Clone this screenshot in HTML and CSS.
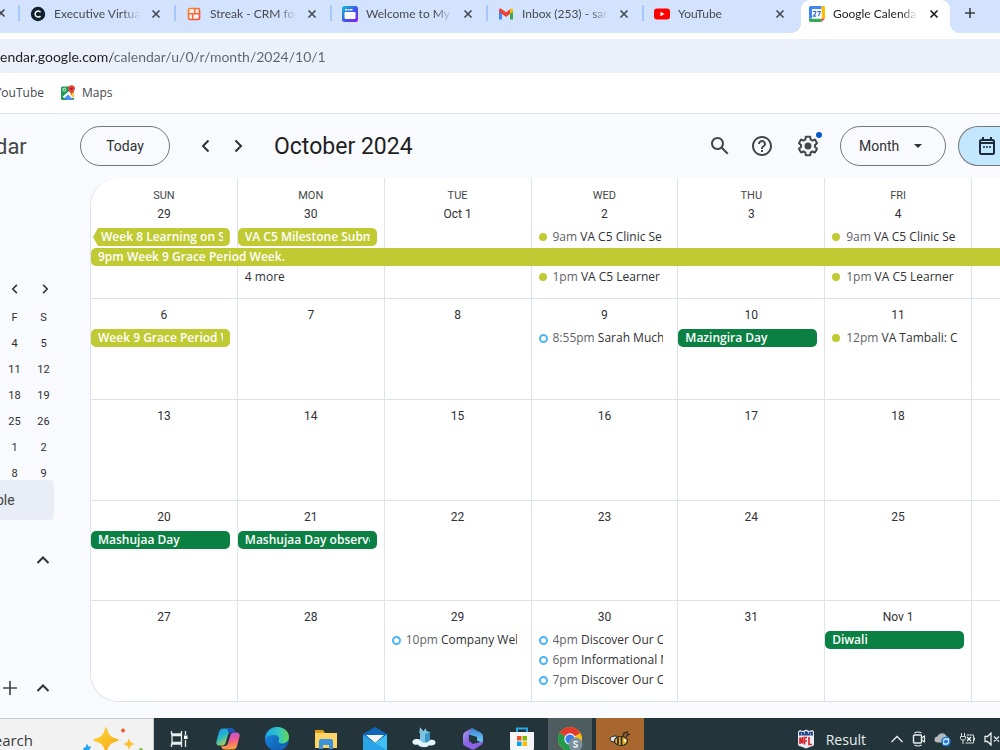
FILE: index.html
```html
<!DOCTYPE html>
<html lang="en">
<head>
<meta charset="utf-8">
<title>Google Calendar - October 2024</title>
<link rel="stylesheet" href="styles.css">
</head>
<body>
<svg class="defs" width="0" height="0" aria-hidden="true">
  <defs>
    <symbol id="x" viewBox="0 0 10 10"><path d="M1.500 1.500l7 7M8.500 1.500l-7 7" fill="none" stroke="currentColor" stroke-width="1.700"/></symbol>
    <symbol id="left" viewBox="0 0 16 16"><path d="M10.500 2.500L5 8l5.500 5.500" fill="none" stroke="currentColor" stroke-width="2"/></symbol>
    <symbol id="right" viewBox="0 0 16 16"><path d="M5.500 2.500L11 8l-5.500 5.500" fill="none" stroke="currentColor" stroke-width="2"/></symbol>
    <symbol id="up" viewBox="0 0 16 16"><path d="M2.500 11L8 5.500l5.500 5.500" fill="none" stroke="currentColor" stroke-width="2"/></symbol>
    <linearGradient id="gStreak" x2="1" y2="1"><stop stop-color="#ff8a2b"/><stop offset="1" stop-color="#f4483a"/></linearGradient>
    <linearGradient id="gWin" x2="1" y2="1"><stop stop-color="#13c3d2"/><stop offset=".5" stop-color="#3b5bea"/><stop offset="1" stop-color="#8b1cf0"/></linearGradient>
    <linearGradient id="gStar" x2="1" y2="1"><stop stop-color="#ffd83a"/><stop offset="1" stop-color="#f3a712"/></linearGradient>
    <linearGradient id="gCopA" x2=".7" y2="1"><stop stop-color="#2488f0"/><stop offset=".45" stop-color="#22b8c9"/><stop offset="1" stop-color="#e9d92c"/></linearGradient>
    <linearGradient id="gCopB" x2=".2" y2="1"><stop stop-color="#a95cf0"/><stop offset=".5" stop-color="#f0569b"/><stop offset="1" stop-color="#fb9b3f"/></linearGradient>
    <linearGradient id="gEdgeA" x2="1" y2="0"><stop stop-color="#1fa3e6"/><stop offset=".6" stop-color="#35c7c0"/><stop offset="1" stop-color="#66d84c"/></linearGradient>
    <linearGradient id="gEdgeB" x2="1" y2="1"><stop stop-color="#1a8fe0"/><stop offset="1" stop-color="#0d4fa8"/></linearGradient>
    <linearGradient id="gM" x2="1" y2="1"><stop stop-color="#b49cf5"/><stop offset="1" stop-color="#6a46d8"/></linearGradient>
    <linearGradient id="gM2" x2="0" y2="1"><stop stop-color="#3d7fd8"/><stop offset="1" stop-color="#6fd3f5"/></linearGradient>
  </defs>
</svg>

<nav class="tabs" aria-label="Browser tabs">
  <div class="stub"><button class="close" aria-label="Close tab"><svg width="10" height="10"><use href="#x"/></svg></button></div>
  <div class="tab">
    <svg width="16" height="16" viewBox="0 0 16 16"><circle cx="8" cy="8" r="7.200" fill="#10202c"/><path d="M10.500 6.200a3 3 0 1 0 0 3.800" fill="none" stroke="#fff" stroke-width="1.500"/></svg>
    <a class="title" href="#">Executive Virtua</a>
    <button class="close" aria-label="Close tab"><svg width="10" height="10"><use href="#x"/></svg></button>
  </div>
  <div class="tab">
    <svg width="16" height="16" viewBox="0 0 16 16"><rect x="2.500" y="2.500" width="11" height="11" rx="1.500" fill="#fff3ee" stroke="url(#gStreak)" stroke-width="1.700"/><path d="M2.500 7.700h11M8.800 3v4.700M6.700 7.700V13" fill="none" stroke="#f8693a" stroke-width="1.500"/></svg>
    <a class="title" href="#">Streak - CRM fo</a>
    <button class="close" aria-label="Close tab"><svg width="10" height="10"><use href="#x"/></svg></button>
  </div>
  <div class="tab">
    <svg width="16" height="16" viewBox="0 0 16 16"><rect width="16" height="16" rx="2.500" fill="url(#gWin)"/><path d="M3 3.800h8" stroke="#fff" stroke-width="1.500" stroke-dasharray="2 .6"/><rect x="2.500" y="6" width="11" height="7" rx="1.200" fill="#fff"/></svg>
    <a class="title" href="#">Welcome to My</a>
    <button class="close" aria-label="Close tab"><svg width="10" height="10"><use href="#x"/></svg></button>
  </div>
  <div class="tab">
    <svg width="16" height="16" viewBox="0 0 16 16"><path d="M1 4v9.500h3V7z" fill="#4285f4"/><path d="M15 4v9.500h-3V7z" fill="#34a853"/><path d="M1 4.200C1 2.400 2.700 2.200 4 3.200l4 3 4-3V8l-4 3-4-3-3-2.200z" fill="#ea4335"/><path d="M12 3.200c1.500-1.100 3-.6 3 1v1.600L12 8z" fill="#fbbc04"/></svg>
    <a class="title" href="#">Inbox (253) - sar</a>
    <button class="close" aria-label="Close tab"><svg width="10" height="10"><use href="#x"/></svg></button>
  </div>
  <div class="tab">
    <svg width="16" height="16" viewBox="0 0 16 16"><rect y="2.500" width="16" height="11" rx="3" fill="#f00"/><path d="M6.500 5.700v4.600l4-2.300z" fill="#fff"/></svg>
    <a class="title" href="#">YouTube</a>
    <button class="close" aria-label="Close tab"><svg width="10" height="10"><use href="#x"/></svg></button>
  </div>
  <div class="tab active">
    <svg width="16" height="16" viewBox="0 0 16 16"><path d="M0 1.500Q0 0 1.500 0h11v3.500H3.500v9H0z" fill="#4285f4"/><path d="M12.500 0h2Q16 0 16 1.500v11h-3.500z" fill="#fbbc04"/><path d="M0 12.500h12.500V16h-11Q0 16 0 14.500z" fill="#34a853"/><path d="M12.500 12.500H16L12.500 16z" fill="#ea4335"/><path d="M3 3h9.500v9.500H3z" fill="#fff"/><path d="M4.300 6.100c.5-1 2.700-.9 2.500.5C6.700 7.800 5 8.800 4.300 10.100h2.900M8.300 5.700h3L9.400 10.300" fill="none" stroke="#2f6fe4" stroke-width="1.200"/></svg>
    <a class="title" href="#">Google Calenda</a>
    <button class="close" aria-label="Close tab"><svg width="10" height="10"><use href="#x"/></svg></button>
  </div>
  <button class="new-tab" aria-label="New tab"><svg width="12" height="12" viewBox="0 0 12 12"><path d="M6 1v10M1 6h10" stroke="#3c4043" stroke-width="1.600"/></svg></button>
</nav>

<div class="address"><input aria-label="Address" value="endar.google.com/calendar/u/0/r/month/2024/10/1"></div>

<div class="bookmarks">
  <a href="#">YouTube</a>
  <a href="#" class="maps"><svg width="16" height="16" viewBox="0 0 16 16"><rect x="1" y="1.500" width="13" height="13.500" rx="1.500" fill="#1e9b53"/><path d="M1 13L9 6l5.500 7z" fill="#fff"/><path d="M2.500 15L8 9.500l5.500 5.500z" fill="#4b8df8"/><path d="M1 10.500L6.500 15H2.500Q1 15 1 13.500z" fill="#1e9b53"/><path d="M9.500 9L14 13.500V7z" fill="#f6c944"/><circle cx="4.300" cy="4.600" r="1.500" fill="none" stroke="#fff" stroke-width=".9"/><path d="M11.500 9.500C11 7.500 8 6 8 3.700a3.500 3.500 0 0 1 7 0c0 2.300-3 3.800-3.500 5.800z" fill="#e8453c"/><circle cx="11.500" cy="3.600" r="1.200" fill="#9c1c16"/></svg>Maps</a>
</div>

<div class="app">
  <header class="bar">
    <span class="brand">dar</span>
    <button class="pill today">Today</button>
    <button class="icon prev" aria-label="Previous month"><svg width="16" height="16"><use href="#left"/></svg></button>
    <button class="icon next" aria-label="Next month"><svg width="16" height="16"><use href="#right"/></svg></button>
    <h1>October 2024</h1>
    <div class="tools">
      <button class="icon" aria-label="Search"><svg width="24" height="24" viewBox="0 0 24 24"><path fill="#444746" d="M20.490 19l-5.730-5.730C15.530 12.200 16 10.910 16 9.500 16 5.910 13.090 3 9.500 3S3 5.910 3 9.500 5.910 16 9.500 16c1.410 0 2.700-.47 3.770-1.240L19 20.490 20.490 19zM5 9.500C5 7.010 7.010 5 9.500 5S14 7.010 14 9.500 11.990 14 9.500 14 5 11.990 5 9.500z"/></svg></button>
      <button class="icon" aria-label="Help"><svg width="24" height="24" viewBox="0 0 24 24"><path fill="#444746" d="M11 18h2v-2h-2v2zm1-16C6.480 2 2 6.480 2 12s4.480 10 10 10 10-4.480 10-10S17.520 2 12 2zm0 18c-4.410 0-8-3.590-8-8s3.590-8 8-8 8 3.590 8 8-3.590 8-8 8zm0-14c-2.210 0-4 1.790-4 4h2c0-1.100.9-2 2-2s2 .9 2 2c0 2-3 1.750-3 5h2c0-2.250 3-2.500 3-5 0-2.210-1.790-4-4-4z"/></svg></button>
      <button class="icon gear" aria-label="Settings"><svg width="24" height="24" viewBox="0 0 24 24"><path fill="#444746" d="M13.850 22.250h-3.700c-.74 0-1.360-.54-1.450-1.270l-.27-1.890c-.27-.14-.53-.29-.79-.46l-1.800.72c-.7.260-1.470-.03-1.810-.65L2.200 15.530c-.35-.66-.2-1.440.36-1.880l1.530-1.190c-.01-.15-.02-.3-.02-.46 0-.15.010-.31.020-.46l-1.520-1.190c-.59-.45-.74-1.260-.37-1.880l1.850-3.190c.34-.62 1.110-.9 1.790-.63l1.810.730c.26-.17.52-.32.780-.46l.27-1.910c.09-.7.710-1.250 1.440-1.250h3.700c.74 0 1.360.54 1.450 1.270l.27 1.890c.27.140.53.290.79.460l1.800-.72c.71-.26 1.480.030 1.820.65l1.840 3.180c.36.66.2 1.440-.36 1.880l-1.520 1.190c.01.150.02.300.020.460s-.01.310-.02.460l1.520 1.190c.56.450.72 1.230.37 1.860l-1.860 3.220c-.34.620-1.110.900-1.800.630l-1.800-.72c-.26.170-.52.320-.78.460l-.27 1.910c-.1.680-.72 1.220-1.460 1.220zm-3.230-2h2.760l.37-2.550.53-.22c.44-.18.88-.44 1.340-.78l.45-.34 2.380.96 1.380-2.400-2.030-1.580.07-.56c.03-.26.060-.51.060-.78s-.03-.53-.06-.78l-.07-.56 2.030-1.580-1.390-2.400-2.390.960-.45-.35c-.42-.32-.87-.58-1.330-.77l-.52-.22-.37-2.550h-2.760l-.37 2.550-.53.210c-.44.190-.88.440-1.340.790l-.45.330-2.380-.95-1.390 2.390 2.030 1.580-.07.560a7 7 0 0 0-.06.790c0 .260.020.530.060.780l.07.560-2.030 1.580 1.380 2.400 2.390-.96.450.350c.43.330.86.580 1.330.770l.53.220.38 2.550z"/><circle cx="12" cy="12" r="3.500" fill="#444746"/></svg><i class="dot"></i></button>
      <label class="pill view"><select aria-label="View"><option>Month</option></select><svg width="8" height="4" viewBox="0 0 8 4"><path d="M0 0h8L4 4z" fill="#303134"/></svg></label>
      <button class="pill mode" aria-label="Switch to Calendar"><svg width="18" height="20" viewBox="0 0 18 20"><path d="M5 1v3M13 1v3" stroke="#1b2b3a" stroke-width="2"/><rect x="2" y="4" width="14" height="14" rx="1.500" fill="none" stroke="#1b2b3a" stroke-width="2"/><path d="M2 7h14" stroke="#1b2b3a" stroke-width="2"/><path d="M5 11h2M8 11h2M11 11h2" stroke="#1b2b3a" stroke-width="1.700"/></svg></button>
    </div>
  </header>

  <div class="body">
    <aside class="side">
      <div class="mini-nav">
        <button class="icon" aria-label="Previous"><svg width="12" height="12"><use href="#left"/></svg></button>
        <button class="icon" aria-label="Next"><svg width="12" height="12"><use href="#right"/></svg></button>
      </div>
      <table class="mini">
        <thead><tr><th>F</th><th>S</th></tr></thead>
        <tbody>
          <tr><td>4</td><td>5</td></tr>
          <tr><td>11</td><td>12</td></tr>
          <tr><td>18</td><td>19</td></tr>
          <tr><td>25</td><td>26</td></tr>
          <tr><td>1</td><td>2</td></tr>
          <tr><td>8</td><td>9</td></tr>
        </tbody>
      </table>
      <input class="people" placeholder="ple" aria-label="Search for people">
      <div class="section first">
        <button class="icon" aria-label="Collapse"><svg width="16" height="16"><use href="#up"/></svg></button>
      </div>
      <div class="section second">
        <button class="icon" aria-label="Add calendar"><svg width="14" height="14" viewBox="0 0 14 14"><path d="M7 0v14M0 7h14" stroke="#444746" stroke-width="1.700"/></svg></button>
        <button class="icon" aria-label="Collapse"><svg width="16" height="16"><use href="#up"/></svg></button>
      </div>
    </aside>

    <main class="month">
      <section class="week top">
        <div class="day c1"><b>SUN</b>29</div><div class="day c2"><b>MON</b>30</div><div class="day c3"><b>TUE</b>Oct 1</div><div class="day c4"><b>WED</b>2</div><div class="day c5"><b>THU</b>3</div><div class="day c6"><b>FRI</b>4</div>
        <button class="chip lime arrow c1 l1"><span>Week 8 Learning on S</span></button>
        <button class="chip lime c2 l1"><span>VA C5 Milestone Subm</span></button>
        <button class="chip lime long l2"><span>9pm Week 9 Grace Period Week.</span></button>
        <button class="more c2 l3">4 more</button>
        <button class="ev c4 l1"><i></i><span><em>9am</em> VA C5 Clinic Se</span></button>
        <button class="ev c4 l3"><i></i><span><em>1pm</em> VA C5 Learner C</span></button>
        <button class="ev c6 l1"><i></i><span><em>9am</em> VA C5 Clinic Se</span></button>
        <button class="ev c6 l3"><i></i><span><em>1pm</em> VA C5 Learner C</span></button>
      </section>
      <section class="week">
        <div class="day c1">6</div><div class="day c2">7</div><div class="day c3">8</div><div class="day c4">9</div><div class="day c5">10</div><div class="day c6">11</div>
        <button class="chip lime c1 l1"><span>Week 9 Grace Period W</span></button>
        <button class="ev open c4 l1"><i></i><span><em>8:55pm</em> Sarah Much</span></button>
        <button class="chip green c5 l1"><span>Mazingira Day</span></button>
        <button class="ev c6 l1"><i></i><span><em>12pm</em> VA Tambali: Co</span></button>
      </section>
      <section class="week">
        <div class="day c1">13</div><div class="day c2">14</div><div class="day c3">15</div><div class="day c4">16</div><div class="day c5">17</div><div class="day c6">18</div>
      </section>
      <section class="week">
        <div class="day c1">20</div><div class="day c2">21</div><div class="day c3">22</div><div class="day c4">23</div><div class="day c5">24</div><div class="day c6">25</div>
        <button class="chip green c1 l1"><span>Mashujaa Day</span></button>
        <button class="chip green c2 l1"><span>Mashujaa Day observe</span></button>
      </section>
      <section class="week">
        <div class="day c1">27</div><div class="day c2">28</div><div class="day c3">29</div><div class="day c4">30</div><div class="day c5">31</div><div class="day c6">Nov 1</div>
        <button class="ev open c3 l1"><i></i><span><em>10pm</em> Company Wel</span></button>
        <button class="ev open c4 l1"><i></i><span><em>4pm</em> Discover Our C</span></button>
        <button class="ev open c4 l2"><i></i><span><em>6pm</em> Informational M</span></button>
        <button class="ev open c4 l3"><i></i><span><em>7pm</em> Discover Our C</span></button>
        <button class="chip green c6 l1"><span>Diwali</span></button>
      </section>
    </main>
  </div>
</div>

<footer class="taskbar">
  <button class="search"><span>earch</span><svg width="66" height="28" viewBox="0 0 66 28"><path d="M23 2c2 8 4 9.500 12 12-8 2.500-10 4-12 12-2-8-4-9.500-12-12 8-2.500 10-4 12-12z" fill="url(#gStar)" stroke="url(#gStar)" stroke-width="1.500" stroke-linejoin="round"/><path d="M46 12c1 4 2 5 6 6-4 1-5 2-6 6-1-4-2-5-6-6 4-1 5-2 6-6z" fill="#fbc02d"/><circle cx="40" cy="4.500" r="2" fill="#ef5b2b"/><circle cx="58" cy="24" r="2" fill="#7cc243"/><path d="M4 17.500l1.500 3 3 .2-2 2.300 1 3-3-.8L2 27.500l-.3-3-2.200-2 3-1.200z" fill="#1ea7ee"/></svg></button>
  <div class="apps">
    <button aria-label="Task view"><svg width="18" height="18" viewBox="0 0 18 18"><path d="M1.500 1v3h10V1M1.500 17v-3h10v3M2 5.500h9.500v7H2zM15.500 1v4M15.500 10v7" fill="none" stroke="#e8eded" stroke-width="1.300"/><path d="M14 5.500h3.500V9H14z" fill="#fff"/></svg></button>
    <button aria-label="Copilot"><svg width="26" height="24" viewBox="0 0 26 24"><path d="M8 1.500h8.500c2 0 2.700 1.500 3.200 3.500h-3.200c-2 0-3 1-3.600 3l-2.200 7.500c-.6 2-1.700 3-3.200 3H4.500c-2.800 0-3.600-2-3-4.300L4 5C4.700 2.700 5.500 1.500 8 1.500z" fill="url(#gCopA)"/><path d="M18 22.500H9.500c-2 0-2.700-1.500-3.200-3.500h3.200c2 0 3-1 3.600-3l2.200-7.500c.6-2 1.700-3 3.200-3h3c2.800 0 3.600 2 3 4.300L22 19c-.7 2.300-1.500 3.500-4 3.500z" fill="url(#gCopB)"/><path d="M12 1.500h4.500c2 0 2.700 1.500 3.200 3.500h-3.200c-1.200 0-2 .4-2.700 1.200z" fill="#1c4fc4"/></svg></button>
    <button aria-label="Edge"><svg width="26" height="26" viewBox="0 0 26 26"><circle cx="13" cy="13" r="12" fill="url(#gEdgeB)"/><path d="M1 13C1.500 5.500 7 1 13 1c7 0 12 4.500 12 10 0 4-3 6.500-7 6.500-2.500 0-4-1-3.500-2.200 1.500-2 .5-6.300-4-6.300C6 9 2 10.500 1 13z" fill="url(#gEdgeA)"/><path d="M10 12c-3 5 1 10 6 11 3 0 5.500-1.500 7-4-4 2-9 1-10.500-2.500C11.500 14.500 12 13 13 12z" fill="#1769bd"/></svg></button>
    <button aria-label="File Explorer"><svg width="24" height="22" viewBox="0 0 24 22"><path d="M1 2h8l2 3h12v15H1z" fill="#e0a016"/><path d="M1 5h22v15H1z" fill="#ffd467"/><path d="M5 21v-8q0-2 2-2h10q2 0 2 2v8h-4v-4H9v4z" fill="#3a94dd"/></svg></button>
    <button aria-label="Mail"><svg width="26" height="26" viewBox="0 0 26 26"><path d="M1 8L13 1l12 7v5H1z" fill="#1067b8"/><path d="M4 9h18l-9 8z" fill="#f3f6f8"/><path d="M1 8.500L13 17 25 8.500V24H1z" fill="#2aa4e8"/><path d="M13 17l12-8.500V24z" fill="#3fc0f5"/></svg></button>
    <button aria-label="Cloud app"><svg width="24" height="24" viewBox="0 0 24 24"><path d="M8 5l5-1.500L18 5v9l-5 2.500L8 14z" fill="#7cc4e4"/><path d="M13 7l5-2v9l-5 2.500z" fill="#3f93c4"/><path d="M8 6l.5-4 2.500 3M12.500 4l1.500-2" stroke="#8ed0ea" stroke-width="1.400" fill="none"/><path d="M5 12c-3 0-5 1.500-4.500 3.500C1 18 4 18 6 17.500c1 3 9 4 11 .8 3 .7 6.500 0 6.500-2.800 0-2.500-3-3-5.500-2.500-1 2-3 2.500-5 2.500s-4-.5-4.500-2.500C7.500 12.300 6.500 12 5 12z" fill="#e3f5fc"/></svg></button>
    <button aria-label="Microsoft 365"><svg width="24" height="26" viewBox="0 0 24 26"><path d="M11 2L4 6Q2 7 2 9.500v8l6 2.500V9z" fill="url(#gM)"/><path d="M11 2l8.500 4.500Q22 8 22 10v7l-6-2.500V11L8 8.500z" fill="url(#gM2)"/><path d="M2 17.500L8 15l4 3 10-3q0 3-2 4l-6 4q-2 1-4 0l-6-3Q2 19 2 17.500z" fill="#8a63e6"/></svg></button>
    <button aria-label="Store"><svg width="26" height="26" viewBox="0 0 26 26"><path d="M8 7V2.500h10V7" fill="none" stroke="#2aa8e6" stroke-width="2"/><path d="M1 6h24v16q0 3-3 3H4q-3 0-3-3z" fill="#f4f5f6"/><path d="M8 10h4.500v4.500H8z" fill="#f25022"/><path d="M13.500 10H18v4.500h-4.500z" fill="#7fba00"/><path d="M8 15.500h4.500V20H8z" fill="#00a4ef"/><path d="M13.500 15.500H18V20h-4.500z" fill="#ffb900"/></svg></button>
    <button class="open-app" aria-label="Chrome"><svg width="26" height="26" viewBox="0 0 26 26"><circle cx="13" cy="13" r="12" fill="#fbc116"/><path d="M13 13L2.600 7A12 12 0 0 1 23.400 7z" fill="#e33b2e"/><path d="M13 13L2.600 7A12 12 0 0 0 13 25l5-9z" fill="#229a4a"/><circle cx="13" cy="13" r="5.700" fill="#fff"/><circle cx="13" cy="13" r="4.600" fill="#3b7ded"/><circle cx="18.500" cy="18.500" r="7" fill="#7b909c"/><path d="M20.500 16.200c-1-1.300-4-1-3.700.7.200 1.800 3.700.9 3.700 2.900 0 1.800-3 1.800-4 .4" fill="none" stroke="#fff" stroke-width="1.200"/></svg></button>
    <button class="bee" aria-label="Bee app"><svg width="22" height="16" viewBox="0 0 22 16"><ellipse cx="6" cy="8" rx="5" ry="3" fill="#dfe5e4" stroke="#2b2b2b"/><ellipse cx="12" cy="10" rx="6.500" ry="4.500" fill="#e9b21e" stroke="#2b2b2b" stroke-width="1.200"/><path d="M9 6.500v7M12.500 5.500v9" stroke="#2b2b2b" stroke-width="1.800"/><path d="M14 6l1-4 4-1M17 6l2-3 2 .5" fill="none" stroke="#2b2b2b" stroke-width="1.400"/><circle cx="16" cy="9.500" r="1.200" fill="#fff"/></svg></button>
  </div>
  <div class="tray">
    <button class="result"><svg width="18" height="20" viewBox="0 0 18 20"><path d="M1 2.500L3 1l3 1 3-1.500L12 2l3-1 2 1.500V15q0 2-3 2.500L9 19.500 4 17.500Q1 17 1 15z" fill="#e9edf3"/><path d="M2 3l2-.5 2.500.7L9 2l2.500 1.200L14 2.500l2 .5v3.500H2z" fill="#274b8c"/><path d="M4 5h1M7 4h1M11 4h1M13 5h1" stroke="#fff"/><path d="M3 15V8.500l2.500 6V8M7.500 15.500V8.500H10M7.500 12H10M12 8v7.500h3" fill="none" stroke="#d22630" stroke-width="1.700"/></svg><span>Result</span></button>
    <button aria-label="Show hidden icons"><svg width="14" height="8" viewBox="0 0 14 8"><path d="M1.500 7L7 1.500 12.500 7" fill="none" stroke="#e8eded" stroke-width="1.300"/></svg></button>
    <button aria-label="Meet now"><svg width="14" height="16" viewBox="0 0 14 16"><rect x="1.500" y="4" width="8" height="8" rx="1" fill="none" stroke="#e8eded" stroke-width="1.400"/><path d="M9.500 7l3-2v6l-3-2M2.500 2Q6 0 9.500 2M2.500 14Q6 16 9.500 14" fill="none" stroke="#e8eded" stroke-width="1.200"/></svg></button>
    <button aria-label="OneDrive"><svg width="18" height="16" viewBox="0 0 18 16"><path d="M3.500 11.500a3 3 0 0 1 0-6C5 1.500 11 1 12.500 5.500c3 0 3.500 3 2.500 6z" fill="#b4bab9"/><circle cx="12" cy="10.500" r="4.800" fill="#1f7bd8"/><path d="M9.500 10a2.600 2.600 0 0 1 4.800-.8V7.500M14.500 11a2.600 2.600 0 0 1-4.800 1v1.500" fill="none" stroke="#fff" stroke-width="1.200"/></svg></button>
    <button aria-label="Battery"><svg width="16" height="14" viewBox="0 0 16 14"><path d="M1.500 1v3M4.500 1v3M.5 4.500h5v2l-1 1.500h-3l-1-1.500zM3 8v4M6.500 3h7v8h-8M14.500 5.500v3" fill="none" stroke="#d4dada"/><path d="M7 5l4 4M11 5L7 9" stroke="#fff" stroke-width="1.200"/></svg></button>
    <button aria-label="Volume muted"><svg width="16" height="14" viewBox="0 0 16 14"><path d="M1 4.500h2.500L7 1v12L3.500 9.500H1zM10 4.500l5 5M15 4.500l-5 5" fill="none" stroke="#e8eded" stroke-width="1.300"/></svg></button>
  </div>
</footer>
</body>
</html>
```

FILE: styles.css
```css
* { box-sizing: border-box; }
body {
  margin: 0;
  height: 100vh;
  display: flex;
  flex-direction: column;
  overflow: hidden;
  background: #fff;
  color: #303134;
  font-family: Roboto, "Liberation Sans", sans-serif;
  font-size: 12px;
}
button, input, select {
  margin: 0;
  padding: 0;
  border: 0;
  background: none;
  color: inherit;
  font: inherit;
}
a { color: inherit; text-decoration: none; }
svg { display: block; flex: none; }
.defs { position: absolute; }

/* browser chrome */
.tabs {
  flex: none;
  display: flex;
  height: 33px;
  overflow: hidden;
  background: #d3e2fd;
  color: #474b50;
  font: 12px Lato, sans-serif;
}
.stub { width: 18px; padding-top: 8px; display: flex; align-items: flex-start; }
.stub .close { margin-left: -4px; }
.tab {
  flex: none;
  display: flex;
  width: 156px;
  height: 27px;
  padding: 0 13px 0 12px;
  align-items: center;
  background: linear-gradient(#a8c7fa, #a8c7fa) 0 5px / 2px 16px no-repeat;
}
.tab.active {
  position: relative;
  width: 149px;
  height: 33px;
  margin-left: 3px;
  padding: 0 11px 6px 8px;
  border-radius: 9px 9px 0 0;
  background: #fff;
  color: #1f1f1f;
}
.tab.active::before, .tab.active::after {
  content: "";
  position: absolute;
  bottom: 0;
  width: 10px;
  height: 10px;
}
.tab.active::before { right: 100%; background: radial-gradient(circle at 0 0, #d3e2fd 10px, #fff 10px); }
.tab.active::after { left: 100%; background: radial-gradient(circle at 100% 0, #d3e2fd 10px, #fff 10px); }
.title {
  flex: 1;
  margin: 0 11px 0 8px;
  overflow: hidden;
  white-space: nowrap;
  -webkit-mask-image: linear-gradient(90deg, #000 80%, transparent);
  mask-image: linear-gradient(90deg, #000 80%, transparent);
}
.close { flex: none; width: 10px; height: 10px; }
.new-tab { margin: 7px 0 0 14px; height: 12px; }
.address { flex: none; padding: 6px 0 0; }
.address input {
  display: block;
  width: 100%;
  height: 34px;
  outline: 0;
  background: linear-gradient(90deg, #1f1f1f 112px, #5f6368 112px) text, #ecf0fa;
  color: transparent;
  font: 14px Lato, sans-serif;
}
.bookmarks {
  flex: none;
  display: flex;
  height: 41px;
  gap: 16px;
  padding-bottom: 1px;
  align-items: center;
  border-bottom: 1px solid #e3e5e8;
  color: #474b50;
  font: 12px "Open Sans", sans-serif;
}
.bookmarks a:first-child { width: 44px; display: flex; justify-content: flex-end; }
.maps { display: flex; gap: 6px; align-items: center; }

/* calendar header */
.app {
  flex: 1;
  min-height: 0;
  display: flex;
  flex-direction: column;
  background: #f8fafd;
}
.bar { flex: none; display: flex; align-items: center; height: 64px; }
.brand { width: 80px; color: #444746; font-size: 22px; text-indent: -5px; }
h1 { margin: 0; font-size: 23px; font-weight: 400; color: #1f1f1f; white-space: nowrap; }
.pill {
  flex: none;
  height: 40px;
  border: 1px solid #747775;
  border-radius: 20px;
  font-size: 14px;
}
.icon { position: relative; display: grid; place-items: center; color: #303134; }
.today { width: 90px; }
.prev { width: 32px; margin-left: 20px; }
.next { width: 32px; margin-right: 20px; }
.tools { display: flex; align-items: center; margin-left: auto; }
.tools .icon { width: 24px; height: 24px; margin-right: 18px; }
.tools .gear { margin: 0 20px 0 4px; }
.dot {
  position: absolute;
  top: -2px;
  right: -2px;
  width: 6px;
  height: 6px;
  border-radius: 50%;
  background: #0b57d0;
}
.view { display: flex; width: 106px; align-items: center; padding: 0 23px 0 18px; justify-content: space-between; }
.view select { appearance: none; outline: 0; }
.mode { width: 42px; margin-left: 12px; padding-left: 19px; border-radius: 20px 0 0 20px; border-right: 0; background: #c2e7ff; }

/* sidebar */
.body { flex: 1; min-height: 0; display: flex; }
.side { flex: none; display: flex; flex-direction: column; width: 90px; padding-top: 98px; overflow: hidden; }
.mini-nav { display: flex; height: 26px; }
.mini-nav .icon { width: 30px; }
.mini { width: 58px; margin-top: 2px; border-collapse: collapse; font-size: 11px; text-align: center; }
.mini th, .mini td { width: 29px; height: 26px; padding: 0; font-weight: 400; }
.people {
  flex: none;
  width: 54px;
  height: 40px;
  margin-top: -6px;
  border-radius: 0 4px 4px 0;
  background: #e9eef6;
  font-size: 14px;
  text-indent: -4px;
}
.people::placeholder { color: #444746; opacity: 1; }
.section { display: flex; width: 51px; height: 24px; justify-content: flex-end; align-items: center; gap: 18px; }
.first { margin-top: 28px; }
.second { margin-top: 104px; }

/* month grid */
.month {
  flex: 1;
  display: flex;
  flex-direction: column;
  min-width: 0;
  margin-bottom: 16px;
  overflow: hidden;
  border: solid #dde3ea;
  border-width: 0 0 1px 1px;
  border-radius: 28px 0 0 28px;
  background: #fff;
}
.week {
  flex: 1;
  display: grid;
  grid-template-columns: repeat(6, minmax(0, 147fr)) minmax(0, 28fr);
  grid-template-rows: 30px 20px 20px 20px 1fr;
  border-top: 1px solid #dde3ea;
}
.week.top { flex: none; grid-template-rows: 50px 20px 20px 20px 10px; border-top: 0; }
.day {
  grid-row: 1 / -1;
  padding-top: 7px;
  border-right: 1px solid #dde3ea;
  font-size: 12px;
  line-height: 18px;
  text-align: center;
}
.top .day { padding-top: 9px; }
.day b { display: block; font-size: 11px; font-weight: 400; color: #444746; }
.c1 { grid-column: 1; }
.c2 { grid-column: 2; }
.c3 { grid-column: 3; }
.c4 { grid-column: 4; }
.c5 { grid-column: 5; }
.c6 { grid-column: 6; }
.long { grid-column: 1 / -1; }
.l1 { grid-row: 2; }
.l2 { grid-row: 3; }
.l3 { grid-row: 4; }
.chip, .ev, .more {
  display: flex;
  height: 18px;
  margin-right: 8px;
  padding: 0 7px;
  align-items: center;
  font-family: "Open Sans", sans-serif;
  line-height: 18px;
  text-align: left;
  white-space: nowrap;
}
.chip { border-radius: 5px; color: #fff; font-weight: 600; }
.chip span, .ev span { flex: 1; overflow: hidden; }
.lime { background: #c0ca33; }
.green { background: #0b8043; }
.chip.long { margin-right: 0; border-radius: 5px 0 0 5px; }
.arrow { margin-left: 2px; padding-left: 8px; clip-path: polygon(0 50%, 5px 0, 100% 0, 100% 100%, 5px 100%); }
.ev { gap: 6px; font-weight: 500; }
.ev i { width: 8px; height: 8px; border-radius: 50%; background: #c0ca33; }
.ev.open i { width: 9px; height: 9px; margin-right: -1px; border: 2px solid #4db4f5; background: none; }
.ev em { font-style: normal; font-weight: 400; color: #5f6368; }

/* taskbar */
.taskbar { flex: none; display: flex; height: 32px; overflow: hidden; background: #23353a; color: #e8eded; }
.taskbar button { flex: none; display: grid; place-items: center; height: 42px; }
.taskbar .search {
  display: flex;
  width: 154px;
  padding: 0 4px 0 0;
  justify-content: flex-end;
  align-items: center;
  gap: 50px;
  border: solid #c4c8c8;
  border-width: 1px 1px 0 0;
  background: #f2f2f2;
  color: #3a3a3a;
  font: 15px "Open Sans", sans-serif;
}
.apps { display: flex; }
.apps button { width: 49px; }
.apps .open-app { width: 44px; margin: 0 4px 0 2px; background: #4d5c5e; }
.apps .bee { width: 48px; background: #a7672f; }
.tray { display: flex; margin-left: auto; gap: 8px; }
.taskbar .result { display: flex; align-items: center; gap: 11px; margin-right: 16px; font: 14px "Open Sans", sans-serif; }
```
